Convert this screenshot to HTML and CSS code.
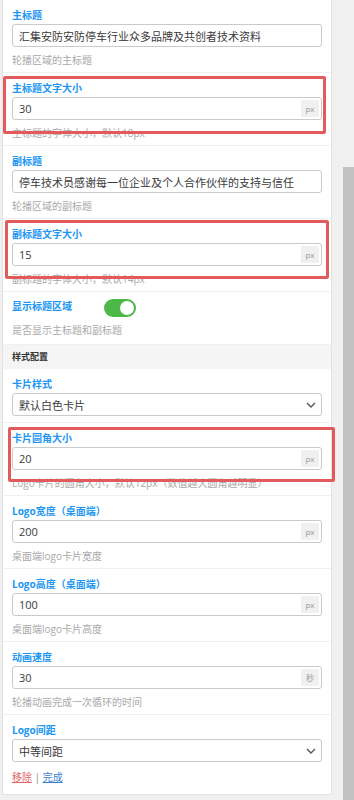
FILE: index.html
```html
<!DOCTYPE html>
<html lang="zh-CN">
<head>
<meta charset="utf-8">
<title>设置</title>
<link rel="stylesheet" href="styles.css">
</head>
<body>
<div class="panel">
  <div class="field">
    <label class="lbl">主标题</label>
    <div class="input"><span class="val">汇集安防安防停车行业众多品牌及共创者技术资料</span></div>
    <p class="help">轮播区域的主标题</p>
  </div>
  <div class="field">
    <label class="lbl">主标题文字大小</label>
    <div class="input"><span class="val">30</span><span class="unit">px</span></div>
    <p class="help">主标题的字体大小，默认18px</p>
    <div class="mark mark-1"></div>
  </div>
  <div class="field">
    <label class="lbl">副标题</label>
    <div class="input"><span class="val">停车技术员感谢每一位企业及个人合作伙伴的支持与信任</span></div>
    <p class="help">轮播区域的副标题</p>
  </div>
  <div class="field">
    <label class="lbl">副标题文字大小</label>
    <div class="input"><span class="val">15</span><span class="unit">px</span></div>
    <p class="help">副标题的字体大小，默认14px</p>
    <div class="mark mark-2"></div>
  </div>
  <div class="field field-toggle">
    <div class="row">
      <label class="lbl lbl-inline">显示标题区域</label>
      <span class="toggle"><span class="knob"></span></span>
    </div>
    <p class="help">是否显示主标题和副标题</p>
  </div>
  <div class="band">样式配置</div>
  <div class="field field-select">
    <label class="lbl">卡片样式</label>
    <div class="input"><span class="val">默认白色卡片</span><svg class="chev" width="10" height="6" viewBox="0 0 10 6"><polyline points="1,1 5,5 9,1" fill="none" stroke="#555" stroke-width="1.4"/></svg></div>
  </div>
  <div class="field">
    <label class="lbl">卡片圆角大小</label>
    <div class="input"><span class="val">20</span><span class="unit">px</span></div>
    <p class="help">Logo卡片的圆角大小，默认12px（数值越大圆角越明显）</p>
    <div class="mark mark-3"></div>
  </div>
  <div class="field">
    <label class="lbl">Logo宽度（桌面端）</label>
    <div class="input"><span class="val">200</span><span class="unit">px</span></div>
    <p class="help">桌面端logo卡片宽度</p>
  </div>
  <div class="field">
    <label class="lbl">Logo高度（桌面端）</label>
    <div class="input"><span class="val">100</span><span class="unit">px</span></div>
    <p class="help">桌面端logo卡片高度</p>
  </div>
  <div class="field">
    <label class="lbl">动画速度</label>
    <div class="input"><span class="val">30</span><span class="unit">秒</span></div>
    <p class="help">轮播动画完成一次循环的时间</p>
  </div>
  <div class="field field-last">
    <label class="lbl">Logo间距</label>
    <div class="input"><span class="val">中等间距</span><svg class="chev" width="10" height="6" viewBox="0 0 10 6"><polyline points="1,1 5,5 9,1" fill="none" stroke="#555" stroke-width="1.4"/></svg></div>
    <div class="actions"><a class="remove" href="#">移除</a> <span class="sep">|</span> <a class="done" href="#">完成</a></div>
  </div>
</div>
<div class="scrollbar"></div>
</body>
</html>
```
FILE: styles.css
```css
* { box-sizing: border-box; }
body {
  margin: 0;
  background: #f0f0f0;
  font-family: "Open Sans", "Noto Sans CJK SC", sans-serif;
}
.panel {
  width: 330px;
  margin-left: 2px;
  background: #fff;
  border: 1px solid #e2e2e2;
  border-top: 0;
  position: relative;
}
.field {
  position: relative;
  padding: 8px 9px 5px;
  border-bottom: 1px solid #f0f0f0;
}
.field-toggle { padding: 7px 9px 7px; }
.field-select { padding-bottom: 6px; }
.field-last { padding-bottom: 10px; border-bottom: 0; }
.lbl {
  display: block;
  font-size: 10px;
  line-height: 14px;
  font-weight: 700;
  color: #2196f3;
  margin-bottom: 2px;
}
.input {
  height: 23px;
  border: 1px solid #cacaca;
  border-radius: 3px;
  display: flex;
  align-items: center;
  padding: 0 2px 0 6px;
  background: #fff;
}
.val {
  flex: 1;
  font-size: 11px;
  color: #3a3a3a;
  white-space: nowrap;
  overflow: hidden;
}
.unit {
  width: 18px;
  height: 17px;
  background: #f0f0f0;
  color: #999;
  font-size: 8px;
  display: flex;
  align-items: center;
  justify-content: center;
}
.chev { margin-right: 3px; }
.help {
  margin: 6px 0 0;
  font-size: 10px;
  line-height: 14px;
  color: #a9a9a9;
  white-space: nowrap;
}
.row {
  display: flex;
  align-items: flex-start;
}
.lbl-inline { margin: 0 32px 0 0; }
.toggle {
  width: 32px;
  height: 18px;
  border-radius: 9px;
  background: #4cb848;
  display: flex;
  align-items: center;
  justify-content: flex-end;
  padding-right: 2px;
}
.knob {
  width: 14px;
  height: 14px;
  border-radius: 50%;
  background: #fff;
}
.band {
  height: 24px;
  line-height: 24px;
  background: #f5f5f5;
  padding-left: 9px;
  font-size: 9px;
  font-weight: 700;
  color: #333;
}
.actions {
  margin-top: 8px;
  font-size: 10px;
  line-height: 14px;
}
.remove { color: #e06868; }
.done { color: #3c7fd0; }
.sep { color: #888; }
.mark {
  position: absolute;
  border: 3px solid #e35a5c;
  border-radius: 2px;
  pointer-events: none;
}
.mark-1 { top: 3px; left: 0; width: 323px; height: 58px; }
.mark-2 { top: 1px; left: 2px; width: 324px; height: 59px; }
.mark-3 { top: 4px; left: 5px; width: 327px; height: 55px; }
.scrollbar {
  position: fixed;
  left: 343px;
  top: 167px;
  width: 11px;
  bottom: 0;
  background: #c2c2c2;
}
```
